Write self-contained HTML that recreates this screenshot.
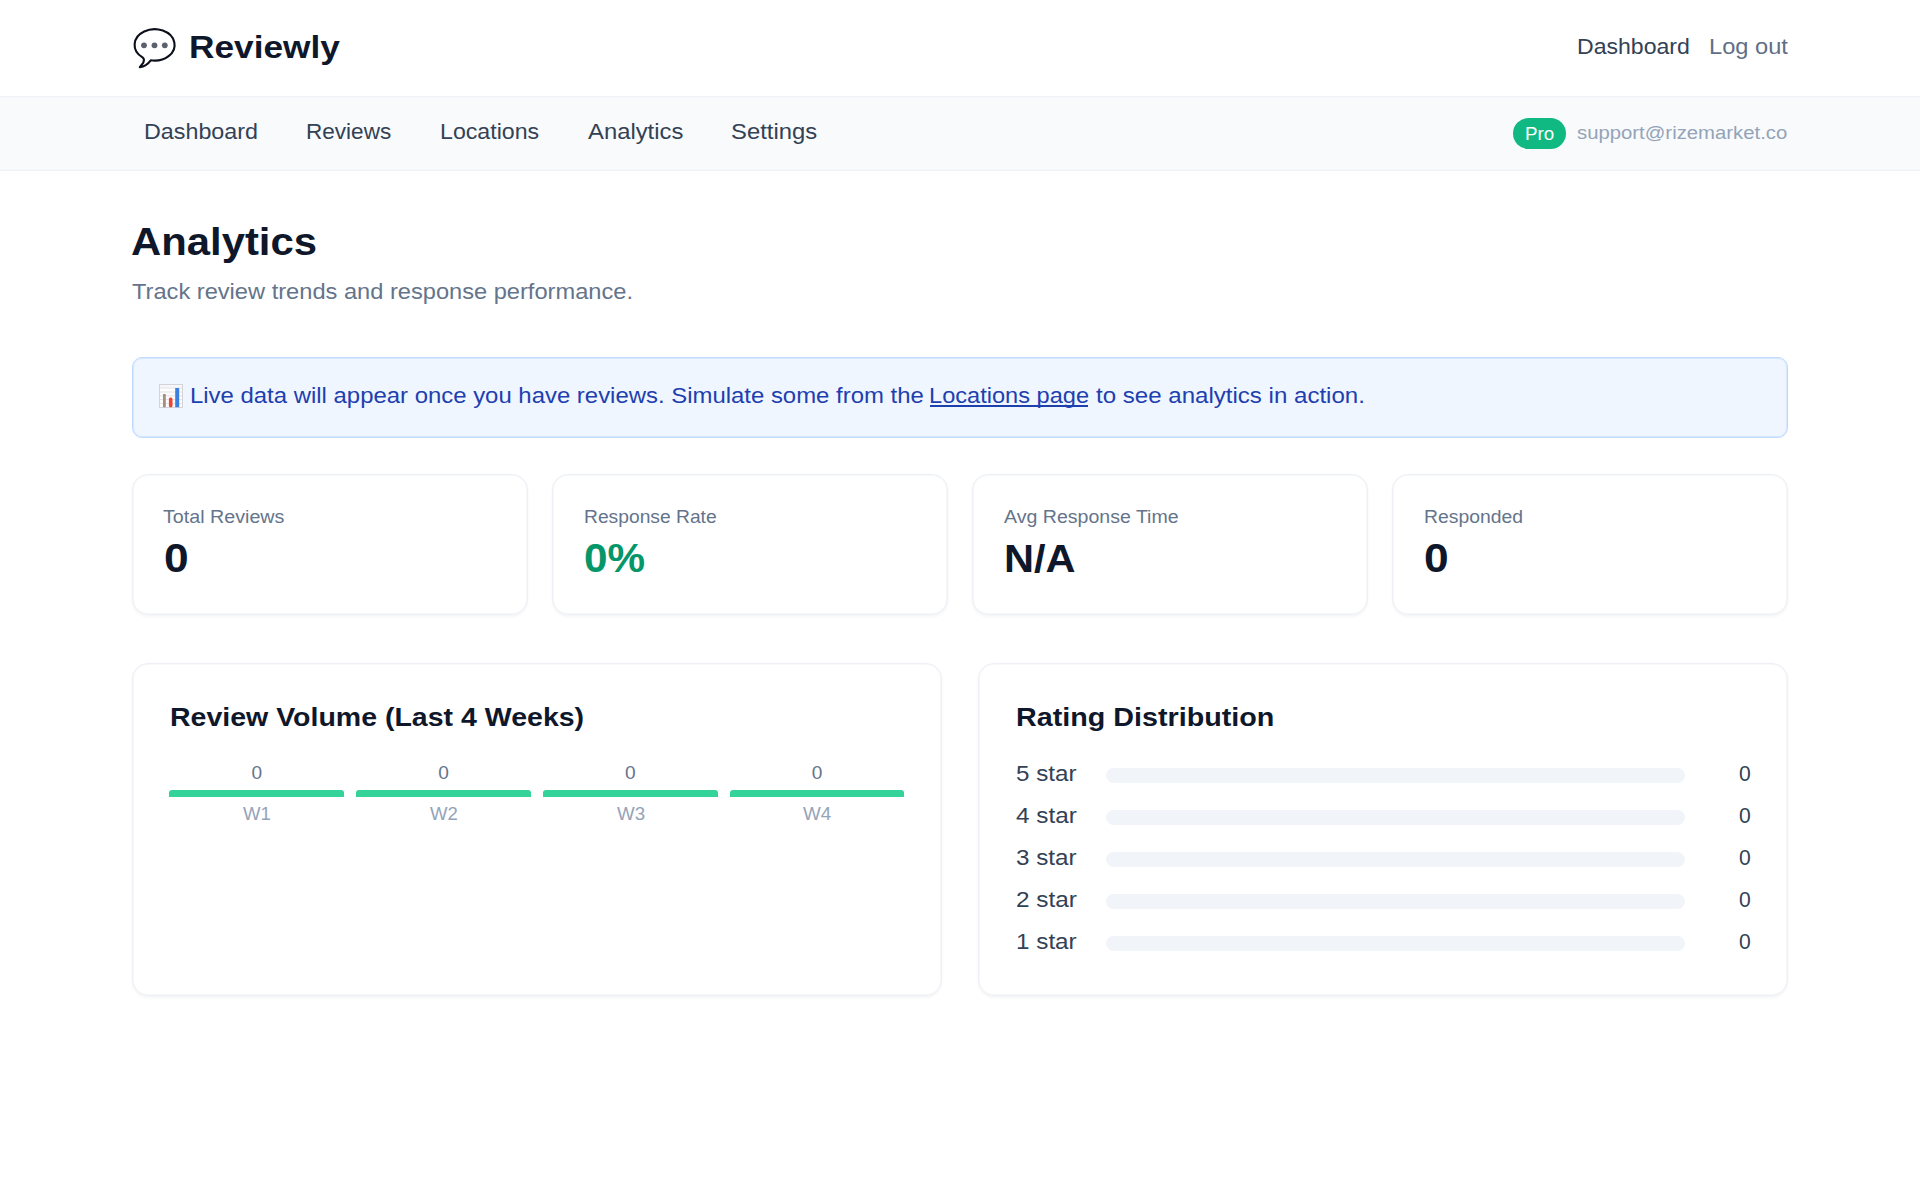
<!DOCTYPE html>
<html><head><meta charset="utf-8"><title>Analytics - Reviewly</title>
<style>
html,body{margin:0;padding:0;background:#ffffff;}
body{width:1920px;height:1200px;position:relative;overflow:hidden;font-family:"Liberation Sans",sans-serif;}
.t{position:absolute;white-space:nowrap;line-height:1;transform-origin:0 0;}
.logo{position:absolute;left:120px;top:20px;width:80px;height:80px;}
.logo svg{display:block}
.nav{position:absolute;left:0;top:96px;width:1920px;height:75px;background:#f8fafc;box-shadow:inset 0 1px 0 #eff3f7, inset 0 2px 0 #f4f7fa, inset 0 -1px 0 #eef2f6, inset 0 -2px 0 #f4f7fa;}
.badge{position:absolute;left:1513px;top:118px;width:53px;height:30.5px;border-radius:15.5px;background:#10b981;}
.banner{position:absolute;left:132px;top:357px;width:1656px;height:81px;box-sizing:border-box;background:#eff6ff;border:1px solid #bfdbfe;box-shadow:inset 0 0 0 1px #d6e7fe;border-radius:10px;}
.chart-ico{position:absolute;left:159px;top:384px;width:24px;height:24px;}
.chart-ico svg{display:block}
.uline{position:absolute;left:930px;top:405px;width:158px;height:1.5px;background:#1e40af;}
.card{position:absolute;background:#fff;border:1px solid #edf0f5;border-radius:16px;box-sizing:border-box;box-shadow:inset 0 0 0 1px #f6f8fa, 0 1.5px 3px rgba(15,23,42,0.04);}
.stat{top:474px;width:396px;height:141px;}
.chart{top:663px;height:333px;}
.vbar{position:absolute;top:790px;height:6.5px;background:#34d399;border-radius:3px 3px 0 0;}
.track{position:absolute;left:1105.5px;width:579px;height:15px;background:#f1f5f9;border-radius:8px;}
</style></head><body>
<div class="logo"><svg width="80" height="80" viewBox="0 0 80 80"><path d="M30.7 40.3 A20 15.7 0 1 0 22.5 37.4 C24 38.4 24.4 40.2 23.2 42.8 L19.8 47.1 C23.8 46.6 27.6 44.6 30.7 40.3 Z" fill="#fff" stroke="#0b0f1a" stroke-width="2.1" stroke-linejoin="round"/><circle cx="24" cy="25.3" r="2.9" fill="#5b606e"/><circle cx="34.5" cy="25.3" r="2.9" fill="#5b606e"/><circle cx="44.8" cy="25.3" r="2.9" fill="#5b606e"/></svg></div>
<div class="t" id="brand" style="left:188.74px;top:31.69px;font-size:31.79px;font-weight:bold;color:#0f172a;transform:scaleX(1.1098);">Reviewly</div>
<div class="t" id="hdash" style="left:1576.66px;top:36.16px;font-size:22.25px;font-weight:normal;color:#334155;transform:scaleX(1.0360);">Dashboard</div>
<div class="t" id="hlogout" style="left:1708.81px;top:36.16px;font-size:22.25px;font-weight:normal;color:#5f6f86;transform:scaleX(1.0620);">Log out</div>
<div class="nav"></div>
<div class="t" id="n1" style="left:144.04px;top:120.66px;font-size:22.25px;font-weight:normal;color:#334155;transform:scaleX(1.0472);">Dashboard</div>
<div class="t" id="n2" style="left:305.70px;top:120.66px;font-size:22.25px;font-weight:normal;color:#334155;transform:scaleX(1.0137);">Reviews</div>
<div class="t" id="n3" style="left:440.45px;top:120.66px;font-size:22.25px;font-weight:normal;color:#334155;transform:scaleX(1.0409);">Locations</div>
<div class="t" id="n4" style="left:588.00px;top:120.66px;font-size:22.25px;font-weight:normal;color:#334155;transform:scaleX(1.0708);">Analytics</div>
<div class="t" id="n5" style="left:730.63px;top:120.66px;font-size:22.25px;font-weight:normal;color:#334155;transform:scaleX(1.0710);">Settings</div>
<div class="badge"></div>
<div class="t" id="pro" style="left:1524.55px;top:124.86px;font-size:18.12px;font-weight:normal;color:#ffffff;transform:scaleX(1.0346);">Pro</div>
<div class="t" id="email" style="left:1577.37px;top:123.45px;font-size:19.07px;font-weight:normal;color:#94a3b8;transform:scaleX(1.0655);">support@rizemarket.co</div>
<div class="t" id="h1" style="left:131.20px;top:222.71px;font-size:38.15px;font-weight:bold;color:#0f172a;transform:scaleX(1.0970);">Analytics</div>
<div class="t" id="sub" style="left:132.27px;top:281.16px;font-size:22.25px;font-weight:normal;color:#64748b;transform:scaleX(1.0623);">Track review trends and response performance.</div>
<div class="banner"></div>
<div class="chart-ico"><svg width="24" height="24" viewBox="0 0 24 24"><rect x="0.5" y="0.5" width="23" height="23" fill="#fdfdfd" stroke="#d3d3da" stroke-width="1"/><rect x="1" y="1" width="22" height="2.8" fill="#f7f7f9"/><g stroke="#dcdce2" stroke-width="0.8"><line x1="1" y1="4" x2="23" y2="4"/><line x1="1" y1="8" x2="23" y2="8"/><line x1="1" y1="11.8" x2="23" y2="11.8"/><line x1="1" y1="15.5" x2="23" y2="15.5"/><line x1="1" y1="19.4" x2="23" y2="19.4"/></g><rect x="4" y="10" width="2.8" height="13.2" fill="#a88e80"/><rect x="9.9" y="13.5" width="3.6" height="9.7" rx="1.5" fill="#ee4433"/><rect x="16.2" y="4" width="4" height="19.2" fill="#3b7fe0"/></svg></div>
<div class="t" id="b1" style="left:189.78px;top:384.96px;font-size:22.25px;font-weight:normal;color:#1e40af;transform:scaleX(1.0748);">Live data will appear once you have reviews. Simulate some from the</div>
<div class="t" id="b2" style="left:928.51px;top:384.96px;font-size:22.25px;font-weight:normal;color:#1e40af;transform:scaleX(1.0608);">Locations page</div>
<div class="uline"></div>
<div class="t" id="b3" style="left:1095.84px;top:384.96px;font-size:22.25px;font-weight:normal;color:#1e40af;transform:scaleX(1.0818);">to see analytics in action.</div>
<div class="card stat" style="left:132px"></div>
<div class="t" id="sl0" style="left:162.99px;top:507.45px;font-size:19.07px;font-weight:normal;color:#64748b;transform:scaleX(1.0321);">Total Reviews</div>
<div class="t" id="sv0" style="left:163.67px;top:538.37px;font-size:40.43px;font-weight:bold;color:#0f172a;transform:scaleX(1.0968);">0</div>
<div class="card stat" style="left:552px"></div>
<div class="t" id="sl1" style="left:583.74px;top:507.45px;font-size:19.07px;font-weight:normal;color:#64748b;transform:scaleX(1.0097);">Response Rate</div>
<div class="t" id="sv1" style="left:583.55px;top:538.37px;font-size:40.43px;font-weight:bold;color:#059669;transform:scaleX(1.0448);">0%</div>
<div class="card stat" style="left:972px"></div>
<div class="t" id="sl2" style="left:1003.62px;top:507.45px;font-size:19.07px;font-weight:normal;color:#64748b;transform:scaleX(1.0258);">Avg Response Time</div>
<div class="t" id="sv2" style="left:1004.03px;top:539.71px;font-size:38.15px;font-weight:bold;color:#0f172a;transform:scaleX(1.0885);">N/A</div>
<div class="card stat" style="left:1392px"></div>
<div class="t" id="sl3" style="left:1423.73px;top:507.45px;font-size:19.07px;font-weight:normal;color:#64748b;transform:scaleX(1.0145);">Responded</div>
<div class="t" id="sv3" style="left:1423.67px;top:538.37px;font-size:40.43px;font-weight:bold;color:#0f172a;transform:scaleX(1.0968);">0</div>
<div class="card chart" style="left:132px;width:810px"></div>
<div class="card chart" style="left:978px;width:810px"></div>
<div class="t" id="ct1" style="left:169.58px;top:705.47px;font-size:25.43px;font-weight:bold;color:#0f172a;transform:scaleX(1.1215);">Review Volume (Last 4 Weeks)</div>
<div class="t" id="ct2" style="left:1015.81px;top:705.47px;font-size:25.43px;font-weight:bold;color:#0f172a;transform:scaleX(1.1293);">Rating Distribution</div>
<div class="vbar" style="left:169.40px;width:174.75px"></div>
<div class="t" id="vc0" style="left:251.46px;top:762.60px;font-size:19.07px;font-weight:normal;color:#64748b;transform:scaleX(1.0000);">0</div>
<div class="t" id="vw0" style="left:243.22px;top:804.25px;font-size:19.07px;font-weight:normal;color:#94a3b8;transform:scaleX(0.9729);">W1</div>
<div class="vbar" style="left:356.15px;width:174.75px"></div>
<div class="t" id="vc1" style="left:438.21px;top:762.60px;font-size:19.07px;font-weight:normal;color:#64748b;transform:scaleX(1.0000);">0</div>
<div class="t" id="vw1" style="left:430.03px;top:804.25px;font-size:19.07px;font-weight:normal;color:#94a3b8;transform:scaleX(0.9727);">W2</div>
<div class="vbar" style="left:542.90px;width:174.75px"></div>
<div class="t" id="vc2" style="left:624.96px;top:762.60px;font-size:19.07px;font-weight:normal;color:#64748b;transform:scaleX(1.0000);">0</div>
<div class="t" id="vw2" style="left:616.59px;top:804.25px;font-size:19.07px;font-weight:normal;color:#94a3b8;transform:scaleX(0.9819);">W3</div>
<div class="vbar" style="left:729.65px;width:174.75px"></div>
<div class="t" id="vc3" style="left:811.71px;top:762.60px;font-size:19.07px;font-weight:normal;color:#64748b;transform:scaleX(1.0000);">0</div>
<div class="t" id="vw3" style="left:803.09px;top:804.25px;font-size:19.07px;font-weight:normal;color:#94a3b8;transform:scaleX(0.9866);">W4</div>
<div class="t" id="rl0" style="left:1016.07px;top:762.86px;font-size:22.25px;font-weight:normal;color:#334155;transform:scaleX(1.0874);">5 star</div>
<div class="track" style="top:768.00px"></div>
<div class="t" id="rc0" style="left:1738.77px;top:762.86px;font-size:22.25px;font-weight:normal;color:#334155;transform:scaleX(0.9490);">0</div>
<div class="t" id="rl1" style="left:1015.85px;top:804.86px;font-size:22.25px;font-weight:normal;color:#334155;transform:scaleX(1.0913);">4 star</div>
<div class="track" style="top:810.00px"></div>
<div class="t" id="rc1" style="left:1738.77px;top:804.86px;font-size:22.25px;font-weight:normal;color:#334155;transform:scaleX(0.9490);">0</div>
<div class="t" id="rl2" style="left:1016.07px;top:846.86px;font-size:22.25px;font-weight:normal;color:#334155;transform:scaleX(1.0874);">3 star</div>
<div class="track" style="top:852.00px"></div>
<div class="t" id="rc2" style="left:1738.77px;top:846.86px;font-size:22.25px;font-weight:normal;color:#334155;transform:scaleX(0.9490);">0</div>
<div class="t" id="rl3" style="left:1015.67px;top:888.86px;font-size:22.25px;font-weight:normal;color:#334155;transform:scaleX(1.0947);">2 star</div>
<div class="track" style="top:894.00px"></div>
<div class="t" id="rc3" style="left:1738.77px;top:888.86px;font-size:22.25px;font-weight:normal;color:#334155;transform:scaleX(0.9490);">0</div>
<div class="t" id="rl4" style="left:1015.88px;top:930.86px;font-size:22.25px;font-weight:normal;color:#334155;transform:scaleX(1.0909);">1 star</div>
<div class="track" style="top:936.00px"></div>
<div class="t" id="rc4" style="left:1738.77px;top:930.86px;font-size:22.25px;font-weight:normal;color:#334155;transform:scaleX(0.9490);">0</div>
</body></html>
